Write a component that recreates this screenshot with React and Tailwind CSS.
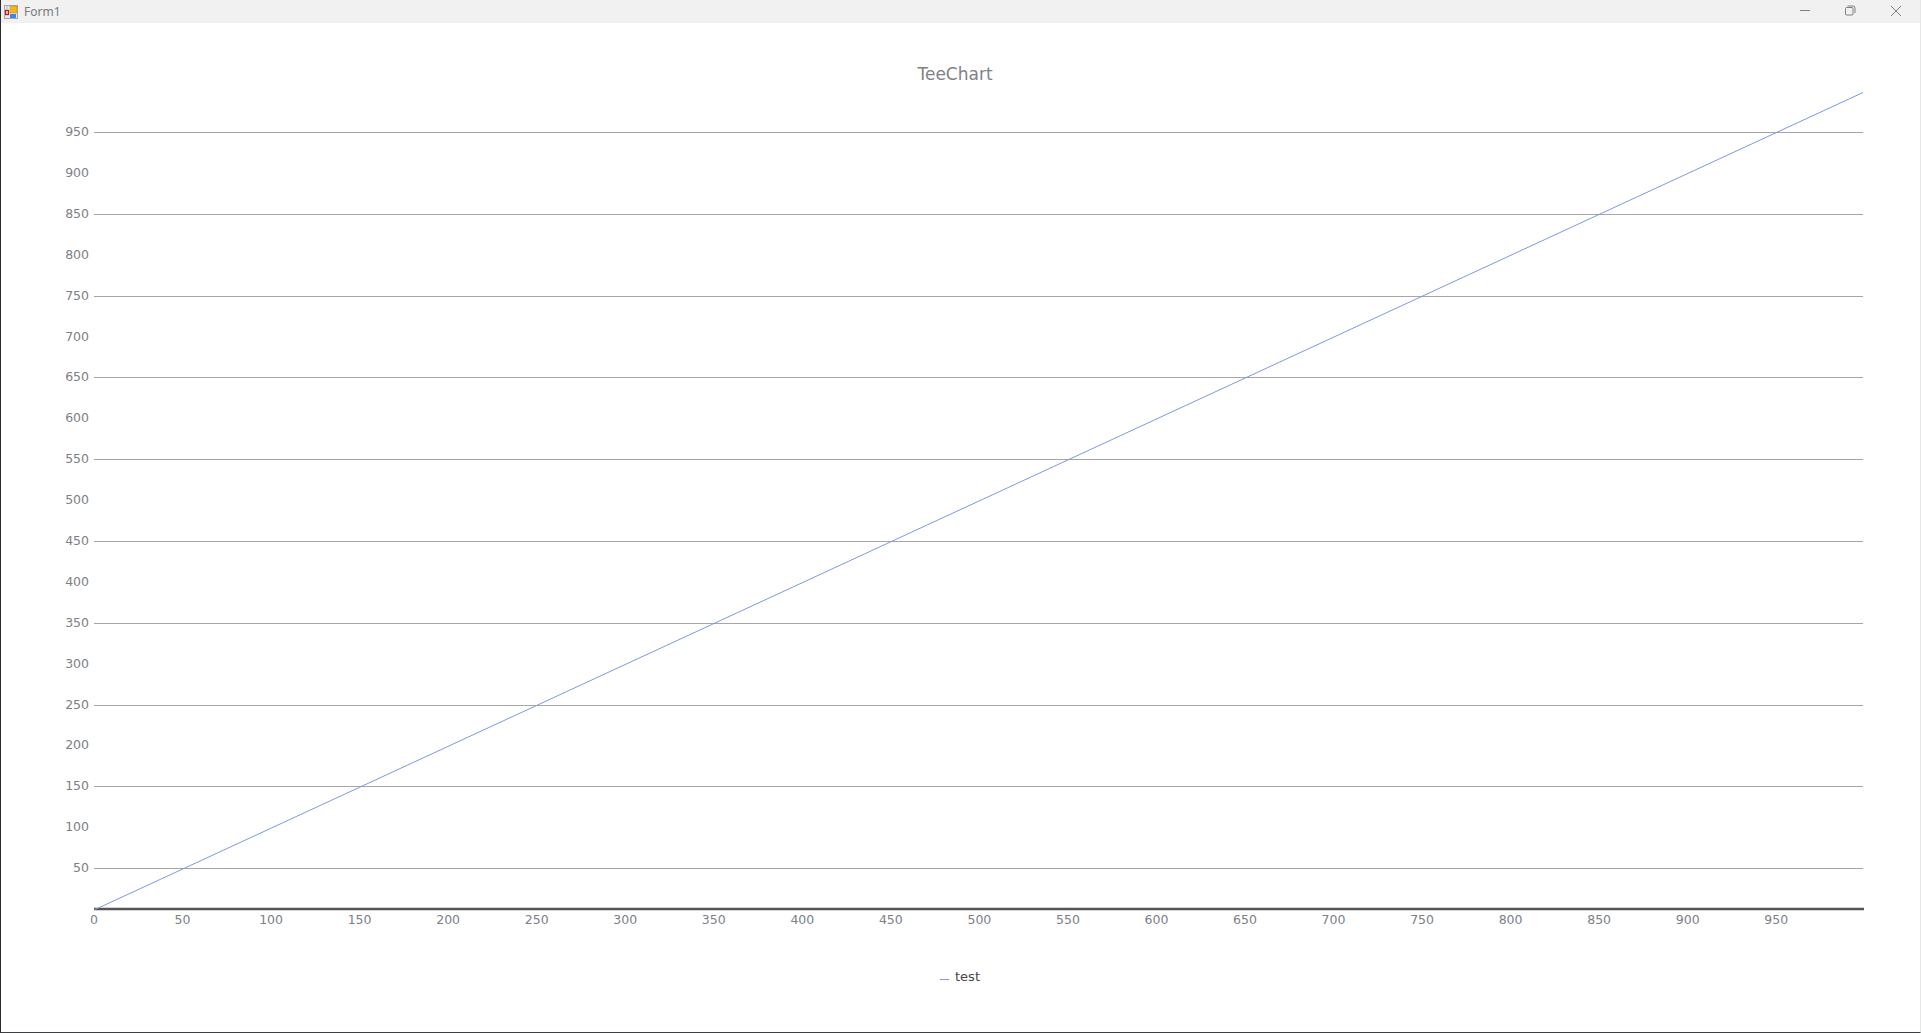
const FONT = "font-['DejaVu_Sans',Verdana,sans-serif]";

const plotLeft = 94;
const plotRight = 1863;
const axisY = 909;
const xScale = (plotRight - plotLeft) / 999;
const yScale = (axisY - 92) / 999;

const ticks = [];
for (let v = 50; v <= 950; v += 50) ticks.push(v);
const gridValues = ticks.filter(v => v % 100 === 50);

const yPos = v => Math.round(axisY - v * yScale);
const xPos = v => plotLeft + v * xScale;

function FormIcon() {
  return (
    <svg width="14" height="14" viewBox="0 0 14 14" className="ml-[3px] shrink-0">
      <rect x="0.5" y="0.5" width="13" height="13" fill="#e8e8e8" stroke="#a8a8a8" />
      <path d="M1 5H5M1 10H5M3 1V5" stroke="#b8b8b8" />
      <rect x="1" y="5" width="4" height="5" fill="#c4141c" />
      <rect x="2" y="6" width="2" height="3" fill="#ffb0a0" />
      <rect x="6" y="1" width="7" height="7" fill="#f2b81c" stroke="#b98a10" strokeWidth="0.5" />
      <rect x="6" y="9" width="6" height="4" fill="#3f86e8" />
    </svg>
  );
}

function TitleBar() {
  return (
    <div className="flex h-[23px] shrink-0 items-center bg-[#f1f1f1]">
      <FormIcon />
      <span className="ml-[6px] font-['Noto_Sans',sans-serif] text-[12px] text-[#7a7a7a]">Form1</span>
      <div className="ml-auto flex items-center pb-[2px] text-[#808080]">
        <svg width="12" height="12" viewBox="0 0 12 12" className="mr-[33px]">
          <path d="M1 5.5H11" stroke="currentColor" />
        </svg>
        <svg width="12" height="12" viewBox="0 0 12 12" className="mr-[34px]">
          <rect x="1.5" y="2.5" width="7.5" height="7.5" rx="1" fill="none" stroke="currentColor" />
          <path d="M3.5 1H9A2 2 0 0 1 11 3V8" fill="none" stroke="currentColor" />
        </svg>
        <svg width="12" height="12" viewBox="0 0 12 12" className="mr-[18px]">
          <path d="M1 1L11 11M11 1L1 11" stroke="currentColor" />
        </svg>
      </div>
    </div>
  );
}

function Chart() {
  return (
    <svg
      width="1919"
      height="855"
      viewBox="1 85 1919 855"
      className={`block shrink-0 ${FONT}`}
      fontSize="12.5"
      fill="#7d8088"
    >
      {gridValues.map(v => (
        <line key={v} x1={plotLeft} x2={plotRight} y1={yPos(v) + 0.5} y2={yPos(v) + 0.5} stroke="#a6a6a6" />
      ))}
      <line x1={plotLeft} x2={plotRight + 1} y1={axisY} y2={axisY} stroke="#555555" strokeWidth="2.5" />
      <line x1={plotLeft} y1={axisY + 1} x2={plotRight} y2="92.5" stroke="#7b9ade" strokeWidth="1" />
      {ticks.map(v => (
        <text key={v} x="89" y={yPos(v) + 4} textAnchor="end">{v}</text>
      ))}
      <text x={plotLeft} y="924" textAnchor="middle">0</text>
      {ticks.map(v => (
        <text key={v} x={xPos(v)} y="924" textAnchor="middle">{v}</text>
      ))}
    </svg>
  );
}

export default function App() {
  return (
    <div className={`flex h-[1033px] w-[1921px] flex-col overflow-hidden border-b border-l border-r border-b-[#3c4040] border-l-[#2a2a30] border-r-[#e6e6e6] bg-white ${FONT}`}>
      <TitleBar />
      <div className="flex h-[62px] shrink-0 items-end justify-center pb-px pr-[11px] text-[17px] leading-[20px] text-[#7f8189]">
        TeeChart
      </div>
      <Chart />
      <div className="flex items-center justify-center pr-px pt-[27px] text-[13px] leading-[20px] text-[#4a4550]">
        <span className="mr-[6px] mt-[5px] h-px w-[9px] bg-[#7b9ade]" />
        <span>test</span>
      </div>
    </div>
  );
}
